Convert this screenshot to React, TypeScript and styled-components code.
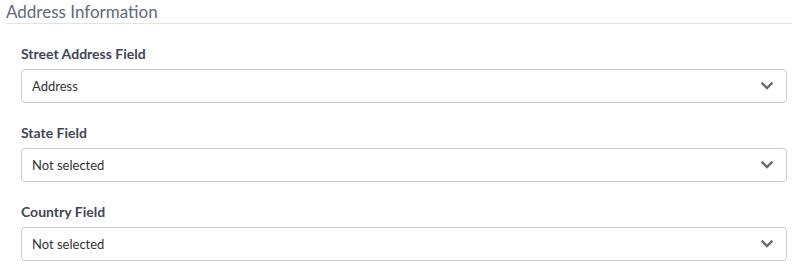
import React from "react";
import styled, { createGlobalStyle } from "styled-components";

const GlobalStyle = createGlobalStyle`
  body {
    margin: 0;
    background: #ffffff;
    font-family: "Lato", "Liberation Sans", sans-serif;
  }
`;

const Section = styled.section`
  width: 792px;
  padding-left: 6px;
  box-sizing: border-box;
`;

const Title = styled.h2`
  margin: 0;
  height: 23px;
  font-size: 17px;
  font-weight: 400;
  line-height: 23px;
  color: #5d6b7b;
  border-bottom: 1px solid #e3e3e3;
  box-sizing: content-box;
`;

const Fields = styled.div`
  display: flex;
  flex-direction: column;
  gap: 20px;
  padding: 20px 5px 0 15px;
`;

const Field = styled.div`
  display: flex;
  flex-direction: column;
  gap: 5px;
`;

const Label = styled.label`
  font-size: 14px;
  font-weight: 700;
  line-height: 20px;
  color: #3f4756;
`;

const Select = styled.div`
  display: flex;
  align-items: center;
  justify-content: space-between;
  height: 34px;
  padding: 0 13px 0 10px;
  border: 1px solid #cccccc;
  border-radius: 4px;
  box-sizing: border-box;
  font-size: 13px;
  color: #333333;
  cursor: pointer;
`;

const Chevron = () => (
  <svg width="12" height="8" viewBox="0 0 12 8" aria-hidden="true">
    <path
      d="M1.5 1.5 L6 6 L10.5 1.5"
      fill="none"
      stroke="#6e6a66"
      strokeWidth="2.4"
      strokeLinecap="square"
    />
  </svg>
);

type FieldProps = { label: string; value: string };

function SelectField({ label, value }: FieldProps) {
  return (
    <Field>
      <Label>{label}</Label>
      <Select>
        <span>{value}</span>
        <Chevron />
      </Select>
    </Field>
  );
}

export default function App() {
  return (
    <>
      <GlobalStyle />
      <Section>
        <Title>Address Information</Title>
        <Fields>
          <SelectField label="Street Address Field" value="Address" />
          <SelectField label="State Field" value="Not selected" />
          <SelectField label="Country Field" value="Not selected" />
        </Fields>
      </Section>
    </>
  );
}
